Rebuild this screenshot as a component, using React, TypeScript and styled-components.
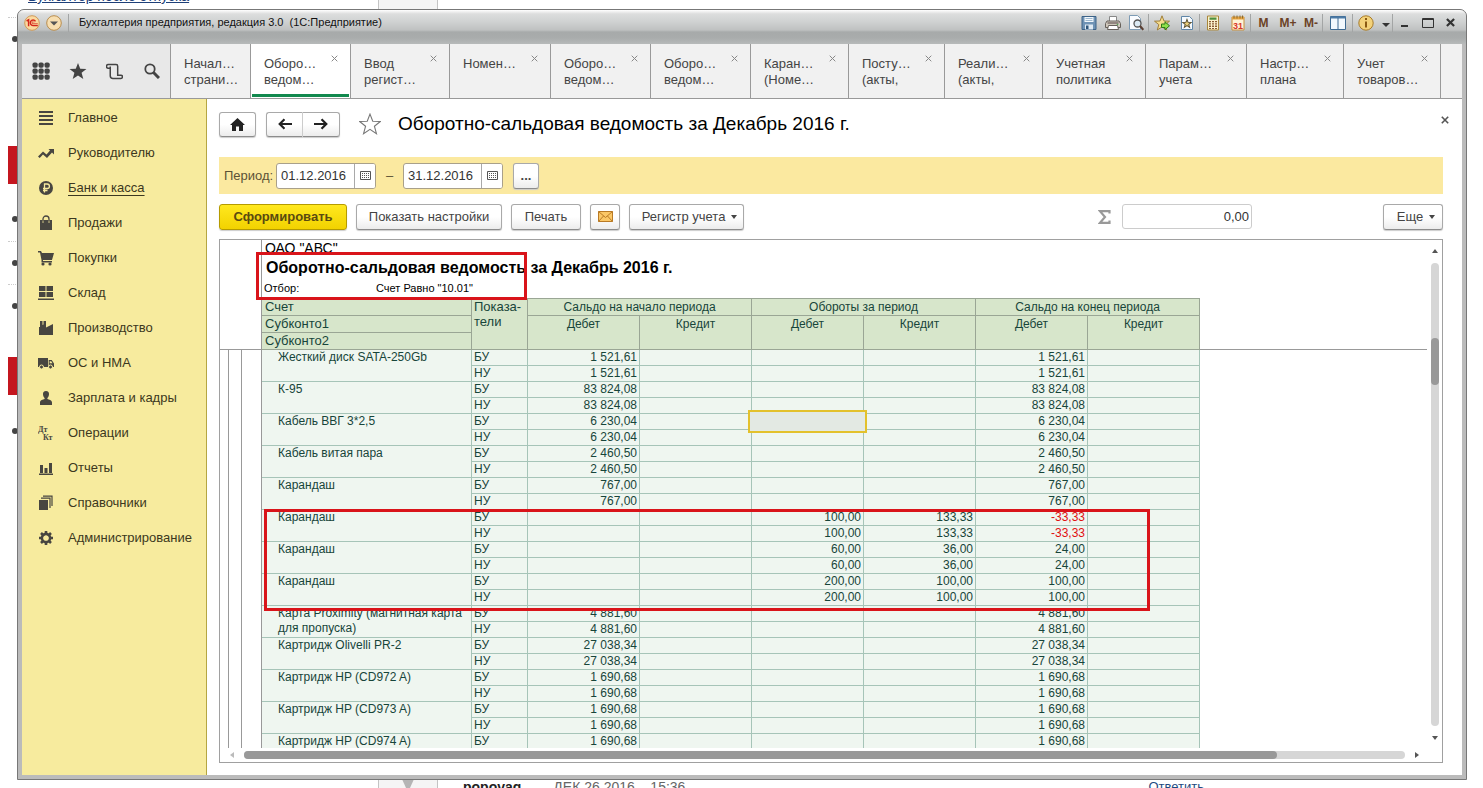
import React from "react";
import styled, { createGlobalStyle, css } from "styled-components";

const Global = createGlobalStyle`
  *, *::before, *::after { box-sizing: border-box; }
  body { margin: 0; background: #fff; font-family: "Liberation Sans", Arial, sans-serif; font-size: 13px; line-height: 16px; color: #444; }
  button, input { font: inherit; color: inherit; margin: 0; padding: 0; }
  svg { display: block; flex: none; }
`;

/* ---------- forum page behind the window ---------- */

const Desktop = styled.div`
  position: relative;
  height: 100vh;
  min-height: 500px;
  padding: 9px 16px 8px 17px;
  overflow: hidden;
`;
const Backdrop = styled.div`
  position: absolute;
  inset: 0;
  display: flex;
  flex-direction: column;
  justify-content: space-between;
  overflow: hidden;
`;
const BackStrip = styled.div`
  display: flex;
  height: 9px;
  padding-left: 8px;
`;
const BackCell = styled.div<{ $w?: number }>`
  flex: none;
  width: ${(p) => (p.$w ? p.$w + "px" : "auto")};
`;
const BackPanel = styled.div`
  flex: none;
  width: 60px;
  border: 1px solid #c4c4c4;
  border-width: 0 1px;
  background: #f5f5f5;
  svg { margin: 0 auto; }
`;
const BackLink = styled.a`
  display: block;
  margin: -12px 0 0 20px;
  font-size: 14px;
  color: #1d3f78;
  text-decoration: underline;
`;
const Reply = styled.a`
  margin-left: auto;
  margin-right: 279px;
  color: #1d4a80;
  font-size: 13px;
  line-height: 16px;
  text-decoration: none;
`;
const Author = styled.b`
  margin-left: 25px;
  color: #222;
  font-size: 14px;
  line-height: 16px;
`;
const Posted = styled.span`
  margin-left: 32px;
  color: #666;
  font-size: 14px;
  line-height: 16px;
  white-space: pre;
`;
const Bullet = styled.i<{ $top: number }>`
  position: absolute;
  left: 12px;
  top: ${(p) => p.$top}px;
  width: 6px;
  height: 6px;
  border-radius: 50%;
  background: #444;
`;
const Rule = styled.i<{ $top: number }>`
  position: absolute;
  left: 8px;
  top: ${(p) => p.$top}px;
  width: 12px;
  border-top: 1px dotted #ccc;
`;
const RedBlock = styled.i<{ $top: number }>`
  position: absolute;
  left: 8px;
  top: ${(p) => p.$top}px;
  width: 12px;
  height: 38px;
  background: #c4161f;
`;

/* ---------- window chrome ---------- */

const Window = styled.div`
  position: relative;
  display: flex;
  flex-direction: column;
  height: 100%;
  padding: 0 4px 4px;
  border: 1px solid #777;
  border-radius: 7px 7px 0 0;
  background: #bbb;
  overflow: hidden;
`;
const TitleBar = styled.header`
  flex: none;
  display: flex;
  align-items: flex-start;
  height: 34px;
  margin: 0 -4px;
  padding: 4px 5px 0 5px;
  background: linear-gradient(#fff 0, #dcdddd 4px, #cfd1d1 12px, #bfc1c1 20px, #a7aaaa 22px, #a9acac 28px, #b7baba 34px);
  color: #111;
`;
const TitleText = styled.h1`
  margin: 0;
  padding-left: 10px;
  font: 11px/16px "Liberation Sans", Arial, sans-serif;
  white-space: pre;
`;
const ChromeButton = styled.button<{ $w: number; $dark?: boolean }>`
  display: flex;
  align-items: center;
  justify-content: center;
  flex: none;
  width: ${(p) => p.$w}px;
  height: 17px;
  border: 0;
  background: none;
  font-size: 12px;
  font-weight: bold;
  color: ${(p) => (p.$dark ? "#333" : "#6b4226")};
`;
const ChromeSep = styled.span`
  flex: none;
  width: 1px;
  height: 18px;
  background: #a3a5a5;
`;
const Spacer = styled.div`
  flex: 1;
`;

/* ---------- section tabs ---------- */

const TabBar = styled.nav`
  flex: none;
  display: flex;
  height: 55px;
  background: #f1f1f1;
  border-bottom: 1px solid #999;
`;
const QuickTools = styled.div`
  flex: none;
  display: flex;
  align-items: center;
  width: 149px;
  background: #e8e8e8;
  border-right: 1px solid #999;
`;
const QuickButton = styled.button`
  display: flex;
  justify-content: center;
  width: 37px;
  border: 0;
  background: none;
  color: #444;
`;
const Tab = styled.div<{ $w: number; $active?: boolean }>`
  position: relative;
  flex: 0 1 ${(p) => p.$w}px;
  min-width: 0;
  border-right: 1px solid #999;
  background: ${(p) => (p.$active ? "#fff" : "#f1f1f1")};
  ${(p) =>
    p.$active &&
    css`
      background: linear-gradient(#12894e, #12894e) 1px 50px / calc(100% - 2px) 3px no-repeat #fff;
    `}
`;
const TabLabel = styled.button`
  display: flex;
  align-items: flex-start;
  width: 100%;
  height: 100%;
  padding: 12px 0 0 13px;
  border: 0;
  background: none;
  text-align: left;
  line-height: 16px;
  color: #444;
  white-space: pre;
  overflow: hidden;
`;
const TabClose = styled.button`
  position: absolute;
  top: 11px;
  right: 12px;
  width: 7px;
  height: 7px;
  border: 0;
  background: none;
  color: #888;
`;

/* ---------- sidebar ---------- */

const Body = styled.div`
  flex: 1;
  min-height: 0;
  display: flex;
  background: #fff;
`;
const Sidebar = styled.nav`
  flex: none;
  width: 185px;
  background: #f7eb9e;
  border-right: 1px solid #b5a642;
`;
const SideLink = styled.a<{ $current?: boolean }>`
  display: flex;
  align-items: center;
  gap: 14px;
  height: 35px;
  padding: 2px 0 0 16px;
  color: #3c3820;
  text-decoration: ${(p) => (p.$current ? "underline" : "none")};
  text-underline-offset: 3px;
  svg { color: #484640; }
`;

/* ---------- report pane ---------- */

const Pane = styled.main`
  flex: 1;
  min-width: 0;
  display: flex;
  flex-direction: column;
  padding: 12px 19px 12px 12px;
`;
const PaneHead = styled.div`
  flex: none;
  display: flex;
  align-items: center;
  height: 26px;
  margin-right: -6px;
`;
const buttonFace = css`
  display: flex;
  align-items: center;
  justify-content: center;
  flex: none;
  border: 1px solid #a9a9a9;
  border-bottom-color: #8c8c8c;
  border-radius: 3px;
  background: linear-gradient(#fff 50%, #ececec);
  box-shadow: 0 1px 1px #ccc;
`;
const NavButton = styled.button`
  ${buttonFace}
  width: 37px;
  height: 25px;
  color: #222;
`;
const NavPair = styled.div`
  display: flex;
  margin: 0 19px 0 10px;
  ${NavButton}:first-child { border-radius: 3px 0 0 3px; border-right-color: #ccc; }
  ${NavButton}:last-child { border-radius: 0 3px 3px 0; border-left: 0; }
`;
const PlainButton = styled.button`
  display: flex;
  border: 0;
  background: none;
  color: #555;
`;
const CloseReport = styled(PlainButton)`
  align-self: flex-start;
  margin-top: 5px;
`;
const ReportTitle = styled.h2`
  margin: 0 0 0 17px;
  flex: 1;
  font-size: 19px;
  font-weight: normal;
  line-height: 24px;
  color: #000;
`;
const PeriodBar = styled.div`
  flex: none;
  display: flex;
  align-items: center;
  height: 37px;
  margin-top: 20px;
  padding-left: 5px;
  background: #fbe9a0;
  color: #5b5236;
`;
const PeriodLabel = styled.label`
  width: 52px;
`;
const DateField = styled.div`
  display: flex;
  width: 100px;
  height: 26px;
  border: 1px solid #a9a08a;
  border-radius: 3px;
  background: #fff;
  overflow: hidden;
`;
const DateInput = styled.input`
  flex: 1;
  min-width: 0;
  padding-left: 4px;
  border: 0;
  background: none;
  color: #333;
`;
const DatePick = styled.button`
  display: flex;
  align-items: center;
  justify-content: center;
  width: 21px;
  border: 0;
  border-left: 1px solid #a9a9a9;
  background: #fff;
  color: #555;
`;
const Dash = styled.span`
  width: 27px;
  text-align: center;
`;
const Commands = styled.div`
  flex: none;
  display: flex;
  align-items: center;
  gap: 9px;
  height: 27px;
  margin: 9px 0;
`;
const Command = styled.button<{ $w: number; $primary?: boolean; $menu?: boolean }>`
  ${buttonFace}
  gap: 6px;
  width: ${(p) => p.$w}px;
  height: 26px;
  padding-left: ${(p) => (p.$menu ? 6 : 0)}px;
  color: #444;
  ${(p) =>
    p.$primary &&
    css`
      border-color: #b59b00;
      background: linear-gradient(#ffe81f, #f2d200);
      font-weight: bold;
      color: #5a4a10;
    `}
`;
const MoreDots = styled(Command)`
  margin-left: 10px;
  font-weight: bold;
`;
const SumLabel = styled.label`
  display: flex;
  align-items: center;
  gap: 11px;
  margin-left: auto;
  margin-right: 122px;
  color: #999;
`;
const SumInput = styled.input`
  width: 130px;
  height: 25px;
  padding-right: 2px;
  border: 1px solid #ccc;
  border-radius: 3px;
  text-align: right;
  color: #333;
`;

/* ---------- spreadsheet ---------- */

const Sheet = styled.section`
  flex: 1;
  min-height: 0;
  display: grid;
  grid-template: minmax(0, 1fr) 14px / minmax(0, 1fr) 15px;
  border: 1px solid #a0a0a0;
`;
const Viewport = styled.div`
  position: relative;
  display: flex;
  overflow: hidden;
  color: #17453a;
`;
const Gutter = styled.div`
  flex: none;
  display: flex;
  flex-direction: column;
  width: 41px;
`;
const GutterHead = styled.div`
  height: 110px;
  border-bottom: 1px solid #999;
`;
const GutterLevels = styled.div`
  flex: 1;
  display: grid;
  grid-template-columns: 9px 13px 1fr;
  i { border-right: 1px solid #999; }
  i:last-child { border: 0; }
`;
const Doc = styled.div`
  flex: 1;
  min-width: 0;
  border-left: 1px solid #999;
`;
const Company = styled.p`
  margin: 0;
  padding-left: 3px;
  height: 16px;
  font-size: 14px;
  line-height: 16px;
  color: #000;
`;
const DocTitle = styled.h3`
  margin: 0;
  padding-left: 4px;
  font-size: 16px;
  line-height: 23px;
  color: #000;
  white-space: nowrap;
`;
const Filter = styled.p`
  display: flex;
  margin: 0;
  padding-left: 2px;
  font-size: 11px;
  line-height: 19px;
  color: #000;
  span { width: 112px; }
`;
const Table = styled.table`
  width: 100%;
  table-layout: fixed;
  border-collapse: separate;
  border-spacing: 0;
  font-size: 12px;
`;
const Head = styled.th<{ $left?: boolean; $top?: boolean }>`
  height: ${(p) => (p.$top ? 18 : 17)}px;
  padding: 0 3px;
  border: 1px solid #9aa695;
  border-width: ${(p) => (p.$top ? "1px 1px 1px 0" : "0 1px 1px 0")};
  background: #d7e6cb;
  font-size: ${(p) => (p.$left ? 13 : 12)}px;
  font-weight: normal;
  line-height: 16px;
  vertical-align: top;
  text-align: ${(p) => (p.$left ? "left" : "center")};
`;
const KindHead = styled(Head)`
  padding: 0 0 0 2px;
  line-height: 15px;
`;
const Filler = styled.th`
  padding: 0;
  border-bottom: 1px solid #999;
`;
const Cell = styled.td<{ $neg?: boolean }>`
  position: relative;
  height: 16px;
  padding: 0 2px 0 0;
  border: 1px solid #a6c4b8;
  border-width: 0 1px 1px 0;
  background: #eff6f0;
  line-height: 15px;
  text-align: right;
  color: ${(p) => (p.$neg ? "#e01010" : "inherit")};
`;
const NameCell = styled(Cell)`
  padding: 0 0 0 16px;
  vertical-align: top;
  text-align: left;
`;
const KindCell = styled(Cell)`
  padding-left: 2px;
  text-align: left;
`;
const Cursor = styled.i`
  position: absolute;
  inset: -4px;
  border: 2px solid #e3c12c;
  background: #e3e9e3;
  z-index: 1;
`;
const RedFrame = styled.div<{ $x: number; $y: number; $w: number; $h: number }>`
  position: absolute;
  z-index: 2;
  left: ${(p) => p.$x}px;
  top: ${(p) => p.$y}px;
  width: ${(p) => p.$w}px;
  height: ${(p) => p.$h}px;
  border: 3px solid #d9141a;
`;
const VScroll = styled.div`
  display: flex;
  flex-direction: column;
  align-items: center;
  justify-content: space-between;
  padding: 8px 0 7px;
  color: #555;
`;
const VTrack = styled.div`
  flex: 1;
  width: 8px;
  margin: 9px 0 9px;
  padding-top: 75px;
  border-radius: 4px;
  background: #d6d6d6;
`;
const VThumb = styled.div`
  height: 47px;
  border-radius: 4px;
  background: #999;
`;
const HScroll = styled.div`
  display: flex;
  align-items: flex-start;
  padding: 3px 7px 0 9px;
  color: #555;
  svg { margin-top: 1px; }
  svg:first-child { color: #bbb; }
`;
const HTrack = styled.div`
  flex: 1;
  height: 8px;
  margin: 0 9px;
  border-radius: 4px;
  background: #d6d6d6;
`;
const HThumb = styled.div`
  width: 89%;
  height: 8px;
  border-radius: 4px;
  background: #999;
`;

/* ---------- drawings ---------- */

const Cross = ({ size = 7, w = 1 }: { size?: number; w?: number }) => (
  <svg width={size} height={size} viewBox="0 0 7 7" stroke="currentColor" strokeWidth={w} fill="none">
    <path d="M.7.7l5.6 5.6M6.3.7L.7 6.3" />
  </svg>
);
const Caret = ({ dir = "down", w = 6 }: { dir?: string; w?: number }) => {
  const d: Record<string, string> = {
    down: "M0 1h6L3 5z",
    up: "M0 5h6L3 1z",
    left: "M5 0v6L1 3z",
    right: "M1 0v6l4-3z",
  };
  return (
    <svg width={w} height={w} viewBox="0 0 6 6" fill="currentColor">
      <path d={d[dir]} />
    </svg>
  );
};

const sideIcons: Record<string, React.ReactNode> = {
  main: <path d="M1 1h14v2H1zM1 5h14v2H1zM1 9h14v2H1zM1 13h14v2H1z" />,
  trend: <path d="M0 11.500l5-5 3.500 3L12 5.500l-1.500-1.500H16v5.500L14 7.500 9 13 5 9.500 1.700 13z" />,
  bank: (
    <>
      <circle cx="8" cy="8" r="7" />
      <path d="M6.500 12.500V4h2.700a2.200 2.200 0 010 4.500H5M5 10.500h4.500" fill="none" stroke="#f7eb9e" strokeWidth="1.300" />
    </>
  ),
  bag: (
    <>
      <path d="M2 5h12v10H2z" />
      <path d="M5 8V4a3 3 0 016 0v4" fill="none" stroke="currentColor" strokeWidth="1.300" />
      <path d="M5 5.500v2.500M11 5.500v2.500" stroke="#f7eb9e" strokeWidth=".8" />
    </>
  ),
  cart: (
    <>
      <path d="M0 1h3l1 2h12l-2 7H5v1h9v1.500H3.500V10L2 2.500H0z" />
      <circle cx="5" cy="14" r="1.600" />
      <circle cx="12" cy="14" r="1.600" />
    </>
  ),
  stock: <path d="M1 1h6.500v5H1zM8.500 1H15v5H8.500zM1 7h6.500v5H1zM8.500 7H15v5H8.500zM0 13.500h16V15H0z" />,
  factory: <path d="M1 15V7h1V1h2.500v4L5.500 4.500V1H8v6.500L15 4v11z" />,
  truck: (
    <>
      <path d="M0 3h10v9H0zM10.700 5h3L16 8.500V12h-5.300z" />
      <path d="M11.700 6.200h1.500l1.300 2h-2.800z" fill="#f7eb9e" />
      <circle cx="3.500" cy="12" r="2" stroke="#f7eb9e" />
      <circle cx="12.500" cy="12" r="2" stroke="#f7eb9e" />
    </>
  ),
  person: <path d="M8 1c2.200 0 3.200 1.500 3 3.500-.2 1.800-.9 3-1.600 3.600V9c1.500.7 4.600 1 4.600 3.500V15H2v-2.500C2 10 5 9.700 6.600 9v-.9C5.900 7.500 5.200 6.300 5 4.500 4.800 2.500 5.800 1 8 1z" />,
  chart: <path d="M2 5h3v8H2zM6.500 8h3v5h-3zM11 3h3v10h-3zM1 13.500h14V15H1z" />,
  books: (
    <>
      <path d="M1 5h9v10H1z" />
      <path d="M3 3.200h9V13M5 1.200h9V11" fill="none" stroke="currentColor" strokeWidth="1.200" />
    </>
  ),
  gear: (
    <>
      <circle cx="8" cy="8" r="4" fill="none" stroke="currentColor" strokeWidth="2.800" />
      <path d="M8 1v3M8 12v3M1 8h3M12 8h3M3 3l2.200 2.200M10.800 10.800L13 13M13 3l-2.200 2.200M5.200 10.800L3 13" stroke="currentColor" strokeWidth="2.600" />
      <circle cx="8" cy="8" r="2.600" fill="#f7eb9e" />
    </>
  ),
  ops: (
    <>
      <text x="0" y="7" fontSize="8" fontWeight="bold" fontFamily="Liberation Serif, serif">Дт</text>
      <text x="5" y="15" fontSize="8" fontWeight="bold" fontFamily="Liberation Serif, serif">Кт</text>
    </>
  ),
};
const SideIcon = ({ name }: { name: string }) => (
  <svg width="16" height="16" viewBox="0 0 16 16" fill="currentColor">
    {sideIcons[name]}
  </svg>
);

const starPath = "M8 .8l2 5.200 5.500.2-4.300 3.400 1.500 5.400L8 11.900l-4.700 3.100 1.500-5.400L.5 6.200 6 6z";

const Ico = ({ children, size = 16 }: { children: React.ReactNode; size?: number }) => (
  <svg width={size} height={size} viewBox="0 0 16 16">
    {children}
  </svg>
);
const SaveIcon = () => (
  <Ico>
    <path d="M1 1.500h14v13H1z" fill="#6f93b5" stroke="#3d6388" />
    <path d="M3.500 2h9v5h-9z" fill="#f3f8fc" />
    <path d="M4.500 3.500h7M4.500 5.500h7" stroke="#9db8cf" />
    <path d="M4 9.500h8v5H4z" fill="#dfeaf3" />
    <path d="M5 10.500h2.500V14H5z" fill="#2f567c" />
  </Ico>
);
const PrintIcon = () => (
  <Ico>
    <path d="M4.500 1.500h7v5h-7z" fill="#fff" stroke="#888" />
    <path d="M2 6h12l1.500 2.500v4h-15v-4z" fill="#cfc8bc" stroke="#66605a" />
    <path d="M3.500 10.500h9l1 4h-11z" fill="#fff" stroke="#66605a" />
    <path d="M2.500 8h11" stroke="#544" />
    <circle cx="12.500" cy="9.500" r=".8" fill="#5a5" />
  </Ico>
);
const PreviewIcon = () => (
  <Ico>
    <path d="M1.500.5h8l3 3v11h-11z" fill="#fafcff" stroke="#7d9bb5" />
    <circle cx="9.500" cy="8.500" r="3.500" fill="#dbe9f3" stroke="#555" strokeWidth="1.300" />
    <path d="M12 11l3.300 3.800" stroke="#5c4033" strokeWidth="2.200" />
  </Ico>
);
const FavAddIcon = () => (
  <Ico>
    <path d={starPath} fill="#f5dc8c" stroke="#a07f3a" />
    <path d="M7.500 9h3.500V6.800l4.500 4-4.500 4v-2.300H7.500z" fill="#8fe04a" stroke="#2c7a18" />
  </Ico>
);
const FavListIcon = () => (
  <Ico>
    <path d="M2.500 1.500h8l3 3v10h-11z" fill="#f7fbff" stroke="#5f86a8" />
    <path d={starPath} transform="translate(3.500 4) scale(.56)" fill="#ecd07c" stroke="#5e5333" strokeWidth="1.800" />
  </Ico>
);
const CalcIcon = () => (
  <Ico>
    <path d="M2.500 1h11v14h-11z" fill="#fbf2cc" stroke="#a8863a" />
    <path d="M4.500 2.500h7v2.300h-7z" fill="#4d8f3c" />
    <path d="M5 6v8M8 6v8M11 6v8" stroke="#7b4a24" strokeWidth="1.800" strokeDasharray="1.300 1" />
  </Ico>
);
const CalendarIcon = () => (
  <Ico>
    <path d="M2 2h12v13H2z" fill="#fff3d6" stroke="#c78f3c" />
    <path d="M2 2h12v2.500H2z" fill="#e6a33f" />
    <path d="M4 .5v3M7 .5v3M10 .5v3M12.500.5v3" stroke="#8a6a30" />
    <text x="3" y="13.500" fontSize="9" fontWeight="bold" fill="#d8372a" fontFamily="Liberation Sans, sans-serif">31</text>
  </Ico>
);
const PanelIcon = () => (
  <Ico>
    <path d="M.5 1.500h15v13H.5z" fill="#f2f8fd" stroke="#3e6a92" />
    <path d="M.5 1.500h15v2H.5z" fill="#4c7ba6" />
    <path d="M8 3v11" stroke="#3e6a92" />
  </Ico>
);
const InfoIcon = () => (
  <Ico>
    <circle cx="8" cy="8" r="7.200" fill="#f3d27a" stroke="#a87c2a" />
    <path d="M7 6.500h2V12.500H7zM7 3h2v2H7z" fill="#8a5a12" />
  </Ico>
);
const LogoIcon = () => (
  <Ico>
    <circle cx="8" cy="8" r="7.300" fill="#fbd9a0" stroke="#cf9a58" />
    <path d="M2.600 6l2-1.200v6.400" fill="none" stroke="#d3261b" strokeWidth="1.500" />
    <path d="M11.500 6.400A2.800 2.800 0 109 10.600h4.800" fill="none" stroke="#d3261b" strokeWidth="1.400" />
    <path d="M9.900 7.400a1 1 0 10-1 1.400h4.900" fill="none" stroke="#d3261b" strokeWidth=".8" />
  </Ico>
);
const MenuIcon = () => (
  <Ico>
    <circle cx="8" cy="8" r="7.300" fill="#f7deb0" stroke="#b98d4e" />
    <path d="M4 6.500h8L8 10.500z" fill="#555" />
  </Ico>
);
const Envelope = () => (
  <svg width="15" height="11" viewBox="0 0 15 11" fill="#fbc766" stroke="#b97a25">
    <path d="M.5.5h14v10H.5z" />
    <path d="M.5.5l7 6 7-6M.5 10.500L5.500 5M14.500 10.500l-5-5.500" fill="none" />
  </svg>
);
const GridCal = () => (
  <svg width="11" height="9" viewBox="0 0 11 9" fill="none" stroke="currentColor">
    <path d="M.5.5h10v8H.5z" />
    <path d="M2 2.500h7M2 4.500h7M2 6.500h7" strokeDasharray="1 1" />
  </svg>
);
const Arrow = ({ flip }: { flip?: boolean }) => (
  <svg width="14" height="12" viewBox="0 0 14 12" fill="none" stroke="currentColor" strokeWidth="2.200">
    <path d={flip ? "M0 6h12M7.500 1.200L12.300 6l-4.800 4.800" : "M14 6H2M6.500 1.200L1.700 6l4.800 4.800"} />
  </svg>
);

/* ---------- data ---------- */

const tabs: [string, number][] = [
  ["Начал…\nстрани…", 80],
  ["Оборо…\nведом…", 100],
  ["Ввод\nрегист…", 99],
  ["Номен…", 101],
  ["Оборо…\nведом…", 100],
  ["Оборо…\nведом…", 100],
  ["Каран…\n(Номе…", 98],
  ["Посту…\n(акты,", 96],
  ["Реали…\n(акты,", 98],
  ["Учетная\nполитика", 103],
  ["Парам…\nучета", 101],
  ["Настр…\nплана", 97],
  ["Учет\nтоваров…", 97],
];

const sections: [string, string][] = [
  ["main", "Главное"],
  ["trend", "Руководителю"],
  ["bank", "Банк и касса"],
  ["bag", "Продажи"],
  ["cart", "Покупки"],
  ["stock", "Склад"],
  ["factory", "Производство"],
  ["truck", "ОС и НМА"],
  ["person", "Зарплата и кадры"],
  ["ops", "Операции"],
  ["chart", "Отчеты"],
  ["books", "Справочники"],
  ["gear", "Администрирование"],
];

/* name, opening debit, turnover debit, turnover credit, closing debit */
const items: [string, string, string, string, string][] = [
  ["Жесткий диск SATA-250Gb", "1 521,61", "", "", "1 521,61"],
  ["К-95", "83 824,08", "", "", "83 824,08"],
  ["Кабель ВВГ 3*2,5", "6 230,04", "", "", "6 230,04"],
  ["Кабель витая пара", "2 460,50", "", "", "2 460,50"],
  ["Карандаш", "767,00", "", "", "767,00"],
  ["Карандаш", "", "100,00", "133,33", "-33,33"],
  ["Карандаш", "", "60,00", "36,00", "24,00"],
  ["Карандаш", "", "200,00", "100,00", "100,00"],
  ["Карта Proximity (магнитная карта для пропуска)", "4 881,60", "", "", "4 881,60"],
  ["Картридж Olivelli PR-2", "27 038,34", "", "", "27 038,34"],
  ["Картридж HP (CD972 A)", "1 690,68", "", "", "1 690,68"],
  ["Картридж HP (CD973 A)", "1 690,68", "", "", "1 690,68"],
  ["Картридж HP (CD974 A)", "1 690,68", "", "", "1 690,68"],
];

const Report = () => (
  <Table>
    <colgroup>
      <col style={{ width: 210 }} />
      <col style={{ width: 56 }} />
      {[0, 1, 2, 3, 4, 5].map((i) => (
        <col key={i} style={{ width: 112 }} />
      ))}
      <col />
    </colgroup>
    <thead>
      <tr>
        <Head $left $top>Счет</Head>
        <KindHead $left $top rowSpan={3}>Показа-<br />тели</KindHead>
        <Head $top colSpan={2}>Сальдо на начало периода</Head>
        <Head $top colSpan={2}>Обороты за период</Head>
        <Head $top colSpan={2}>Сальдо на конец периода</Head>
        <Filler rowSpan={3} />
      </tr>
      <tr>
        <Head $left>Субконто1</Head>
        {[0, 1, 2].map((i) => (
          <React.Fragment key={i}>
            <Head rowSpan={2}>Дебет</Head>
            <Head rowSpan={2}>Кредит</Head>
          </React.Fragment>
        ))}
      </tr>
      <tr>
        <Head $left>Субконто2</Head>
      </tr>
    </thead>
    <tbody>
      {items.map(([name, open, debit, credit, close], i) =>
        ["БУ", "НУ"].map((kind) => (
          <tr key={i + kind}>
            {kind === "БУ" && <NameCell rowSpan={2}>{name}</NameCell>}
            <KindCell>{kind}</KindCell>
            <Cell>{open}</Cell>
            <Cell />
            <Cell>
              {debit}
              {i === 2 && kind === "БУ" && <Cursor />}
            </Cell>
            <Cell>{credit}</Cell>
            <Cell $neg={close.startsWith("-")}>{close}</Cell>
            <Cell />
          </tr>
        ))
      )}
    </tbody>
  </Table>
);

export default function App() {
  return (
    <Desktop>
      <Global />
      <Backdrop>
        <BackStrip>
          <BackCell $w={370}>
            <BackLink href="#topic">Бухгалтер после отпуска</BackLink>
          </BackCell>
          <BackPanel />
        </BackStrip>
        {[36, 216, 260, 303, 428].map((t) => (
          <Bullet key={t} $top={t} />
        ))}
        {[17, 241, 284].map((t) => (
          <Rule key={t} $top={t} />
        ))}
        <RedBlock $top={146} />
        <RedBlock $top={357} />
        <BackStrip>
          <BackCell $w={370} />
          <BackPanel>
            <svg width="12" height="9" viewBox="0 0 12 9" fill="#b5b5b5">
              <path d="M0 0h12L8 9H4z" />
            </svg>
          </BackPanel>
          <Author>popovag</Author>
          <Posted>{"ДЕК 26 2016    15:36"}</Posted>
          <Reply href="#reply">Ответить</Reply>
        </BackStrip>
      </Backdrop>

      <Window>
        <TitleBar>
          <ChromeButton $w={17} aria-label="1С"><LogoIcon /></ChromeButton>
          <ChromeButton $w={28} aria-label="Меню"><MenuIcon /></ChromeButton>
          <ChromeSep />
          <TitleText>{"Бухгалтерия предприятия, редакция 3.0  (1С:Предприятие)"}</TitleText>
          <Spacer />
          <ChromeButton $w={24} aria-label="Сохранить"><SaveIcon /></ChromeButton>
          <ChromeButton $w={23} aria-label="Печать"><PrintIcon /></ChromeButton>
          <ChromeButton $w={24} aria-label="Просмотр"><PreviewIcon /></ChromeButton>
          <ChromeSep />
          <ChromeButton $w={26} aria-label="В избранное"><FavAddIcon /></ChromeButton>
          <ChromeButton $w={24} aria-label="Избранное"><FavListIcon /></ChromeButton>
          <ChromeSep />
          <ChromeButton $w={25} aria-label="Калькулятор"><CalcIcon /></ChromeButton>
          <ChromeButton $w={25} aria-label="Календарь"><CalendarIcon /></ChromeButton>
          <ChromeSep />
          <ChromeButton $w={25}>M</ChromeButton>
          <ChromeButton $w={24}>M+</ChromeButton>
          <ChromeButton $w={22}>M-</ChromeButton>
          <ChromeSep />
          <ChromeButton $w={29} aria-label="Панели"><PanelIcon /></ChromeButton>
          <ChromeSep />
          <ChromeButton $w={26} aria-label="Справка"><InfoIcon /></ChromeButton>
          <ChromeButton $w={13} aria-label="Еще команды">
            <svg width="8" height="10" viewBox="0 0 8 10" fill="#333"><path d="M0 5h8L4 9z" /></svg>
          </ChromeButton>
          <ChromeSep />
          <ChromeButton $w={24} aria-label="Свернуть">
            <svg width="8" height="12" viewBox="0 0 8 12" fill="#333"><path d="M0 8h7v2H0z" /></svg>
          </ChromeButton>
          <ChromeButton $w={22} aria-label="Развернуть">
            <svg width="12" height="10" viewBox="0 0 12 10" fill="none" stroke="#333"><path d="M.5.5h11v9H.5z" /><path d="M0 1.500h12" /></svg>
          </ChromeButton>
          <ChromeButton $w={22} $dark aria-label="Закрыть"><Cross size={9} w={1.7} /></ChromeButton>
        </TitleBar>

        <TabBar>
          <QuickTools>
            <QuickButton aria-label="Разделы">
              <svg width="18" height="18" viewBox="0 0 18 18" fill="currentColor">
                {[0, 1, 2].map((r) => [0, 1, 2].map((c) => <rect key={r * 3 + c} x={c * 6 + 0.5} y={r * 6 + 0.5} width="5.200" height="5.200" rx="1.800" />))}
              </svg>
            </QuickButton>
            <QuickButton aria-label="Избранное">
              <Ico size={18}><path d={starPath} fill="#444" /></Ico>
            </QuickButton>
            <QuickButton aria-label="История">
              <Ico size={17}>
                <path d="M4 5H2.200a1.700 1.700 0 010-3.500H9.500A1.500 1.500 0 0111 3v8.500h3a1.500 1.500 0 010 3H6.500A2.500 2.500 0 014 12V3.200" fill="none" stroke="#444" strokeWidth="1.400" />
              </Ico>
            </QuickButton>
            <QuickButton aria-label="Поиск">
              <Ico>
                <circle cx="6" cy="6" r="4.700" fill="none" stroke="#444" strokeWidth="1.800" />
                <path d="M9.500 9.500l5.500 5.500" stroke="#444" strokeWidth="3" />
              </Ico>
            </QuickButton>
          </QuickTools>
          {tabs.map(([label, w], i) => (
            <Tab key={i} $w={w} $active={i === 1}>
              <TabLabel>{label}</TabLabel>
              {i > 0 && <TabClose aria-label="Закрыть вкладку"><Cross /></TabClose>}
            </Tab>
          ))}
        </TabBar>

        <Body>
          <Sidebar>
            {sections.map(([icon, label]) => (
              <SideLink key={icon} href={"#" + icon} $current={icon === "bank"}>
                <SideIcon name={icon} />
                {label}
              </SideLink>
            ))}
          </Sidebar>

          <Pane>
            <PaneHead>
              <NavButton aria-label="Домой">
                <svg width="15" height="13" viewBox="0 0 15 13" fill="currentColor"><path d="M7.500 0L15 7h-2v6H9V8.500H6V13H2V7H0z" /></svg>
              </NavButton>
              <NavPair>
                <NavButton aria-label="Назад"><Arrow /></NavButton>
                <NavButton aria-label="Вперед"><Arrow flip /></NavButton>
              </NavPair>
              <PlainButton aria-label="В избранное">
                <Ico size={22}><path d={starPath} fill="#fff" stroke="#777" strokeWidth=".8" /></Ico>
              </PlainButton>
              <ReportTitle>Оборотно-сальдовая ведомость за Декабрь 2016 г.</ReportTitle>
              <CloseReport aria-label="Закрыть"><Cross size={8} w={1.4} /></CloseReport>
            </PaneHead>

            <PeriodBar>
              <PeriodLabel htmlFor="from">Период:</PeriodLabel>
              <DateField>
                <DateInput id="from" defaultValue="01.12.2016" />
                <DatePick aria-label="Выбрать дату"><GridCal /></DatePick>
              </DateField>
              <Dash>–</Dash>
              <DateField>
                <DateInput aria-label="По" defaultValue="31.12.2016" />
                <DatePick aria-label="Выбрать дату"><GridCal /></DatePick>
              </DateField>
              <MoreDots $w={26}>...</MoreDots>
            </PeriodBar>

            <Commands>
              <Command $w={128} $primary>Сформировать</Command>
              <Command $w={146}>Показать настройки</Command>
              <Command $w={70}>Печать</Command>
              <Command $w={30} aria-label="Отправить"><Envelope /></Command>
              <Command $w={115} $menu>Регистр учета <Caret /></Command>
              <SumLabel>
                <svg width="13" height="14" viewBox="0 0 13 14" fill="none" stroke="#999" strokeWidth="2.200" role="img" aria-label="Сумма">
                  <path d="M11.500 3.500V1.200H2l5 5.800-5 5.800h9.500v-2.300" />
                </svg>
                <SumInput defaultValue="0,00" />
              </SumLabel>
              <Command $w={60} $menu>Еще <Caret /></Command>
            </Commands>

            <Sheet>
              <Viewport>
                <Gutter>
                  <GutterHead />
                  <GutterLevels><i /><i /><i /></GutterLevels>
                </Gutter>
                <Doc>
                  <Company>ОАО "АВС"</Company>
                  <DocTitle>Оборотно-сальдовая ведомость за Декабрь 2016 г.</DocTitle>
                  <Filter><span>Отбор:</span>Счет Равно "10.01"</Filter>
                  <Report />
                </Doc>
                <RedFrame $x={36} $y={12} $w={271} $h={48} />
                <RedFrame $x={44} $y={269} $w={886} $h={102} />
              </Viewport>
              <VScroll>
                <Caret dir="up" />
                <VTrack><VThumb /></VTrack>
                <Caret />
              </VScroll>
              <HScroll>
                <Caret dir="left" />
                <HTrack><HThumb /></HTrack>
                <Caret dir="right" />
              </HScroll>
            </Sheet>
          </Pane>
        </Body>
      </Window>
    </Desktop>
  );
}
